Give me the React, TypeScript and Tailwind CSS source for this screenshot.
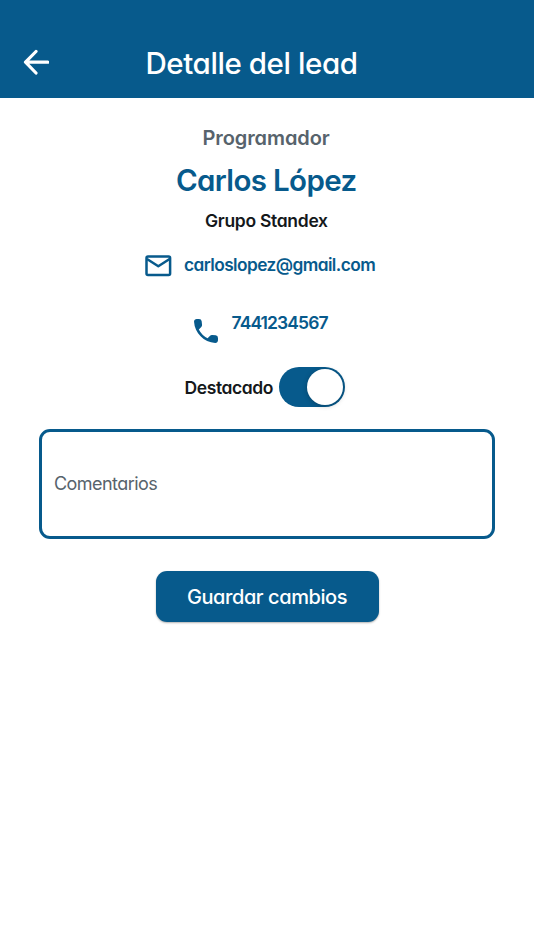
import React from 'react';

export default function App() {
  return (
    <main className="flex h-[950px] w-[534px] flex-col overflow-hidden bg-white font-['Inter','Lato',sans-serif] font-semibold text-[#075a8c] [font-feature-settings:'cv11','ss03']">
      <header className="flex h-[98px] w-full shrink-0 bg-[#075a8c] pt-[42px] text-white">
        <button className="ml-[15px] flex h-10 w-10 items-center justify-center" aria-label="Volver">
          <svg width="28" height="28" viewBox="0 0 28 28" fill="none" stroke="currentColor" strokeWidth="3.2" strokeLinecap="round" strokeLinejoin="round">
            <path d="M15 3.5 4.5 14.2 15 25M5 14.2H26.8" />
          </svg>
        </button>
        <h1 className="ml-[90.5px] h-10 whitespace-nowrap text-[29.5px] font-[550] leading-[42px] tracking-[-0.42px]">Detalle del lead</h1>
      </header>

      <section className="flex flex-col">
        <p className="ml-[202.5px] mt-[25px] h-[30px] whitespace-nowrap text-[20px] leading-[30px] tracking-[-0.1px] text-[#57636c]">Programador</p>
        <h2 className="ml-[176px] mt-[7px] h-[40px] whitespace-nowrap text-[29.5px] leading-[41px] tracking-[-0.65px]">Carlos López</h2>
        <p className="ml-[205px] mt-[6px] h-[31px] whitespace-nowrap text-[17.5px] leading-[30px] tracking-[-0.3px] text-[#14181b]">Grupo Standex</p>

        <div className="ml-[145px] mt-[14px] flex h-[30px] items-center">
          <svg width="27" height="22" viewBox="0 0 27 22" fill="none" stroke="currentColor" strokeWidth="2.5" strokeLinejoin="round">
            <rect x="1.5" y="1.5" width="23.6" height="18.6" rx="1.5" />
            <path d="m2 4 11.3 7.3L24.6 4" />
          </svg>
          <span className="ml-[12px] whitespace-nowrap text-[17.3px] leading-[28px] pb-[2px] tracking-[-0.57px]">carloslopez@gmail.com</span>
        </div>

        <div className="ml-[194px] mt-[27px] flex h-[36px]">
          <svg className="mt-[11px]" width="24" height="24" viewBox="3 3 18 18" fill="currentColor">
            <path d="M19.23 15.26 16.69 14.97a1.99 1.99 0 0 0-1.64.57l-1.84 1.84a15.05 15.05 0 0 1-6.59-6.59l1.85-1.85c.43-.43.64-1.03.57-1.64L8.75 4.78A2 2 0 0 0 6.76 3.01H5.03c-1.13 0-2.07.94-2 2.07.53 8.54 7.36 15.36 15.89 15.89 1.13.07 2.07-.87 2.07-2v-1.73a1.99 1.99 0 0 0-1.76-1.98Z" />
          </svg>
          <span className="ml-[13.5px] whitespace-nowrap text-[17.5px] leading-[30px] tracking-[-0.9px]">7441234567</span>
        </div>

        <div className="ml-[184.5px] mt-[23px] flex h-10 items-center">
          <span className="w-[94px] whitespace-nowrap text-[17.5px] leading-[41px] tracking-[-0.4px] text-[#14181b]">Destacado</span>
          <span role="switch" aria-checked="true" aria-label="Destacado" className="flex h-10 w-[66px] items-center justify-end rounded-full bg-[#075a8c] pr-[2px]">
            <span className="h-[36px] w-[36px] rounded-full bg-white shadow-[0_1px_5px_rgba(0,0,0,.25)]" />
          </span>
        </div>

        <div className="mx-[39px] mt-[22px] flex h-[110px] items-center rounded-[11px] border-[3px] border-[#075a8c] pl-[12px]">
          <span className="mb-[2px] whitespace-nowrap text-[18px] font-normal tracking-[-0.55px] text-[#57636c]">Comentarios</span>
        </div>

        <button className="mt-[31.5px] flex h-[51.5px] w-[223px] items-center justify-center self-center rounded-[11px] bg-[#075a8c] text-[20px] font-[550] text-white shadow-[0_1px_2px_rgba(0,0,0,.3)]">
          <span className="whitespace-nowrap pt-[2px] tracking-[-0.42px]">Guardar cambios</span>
        </button>
      </section>
    </main>
  );
}
